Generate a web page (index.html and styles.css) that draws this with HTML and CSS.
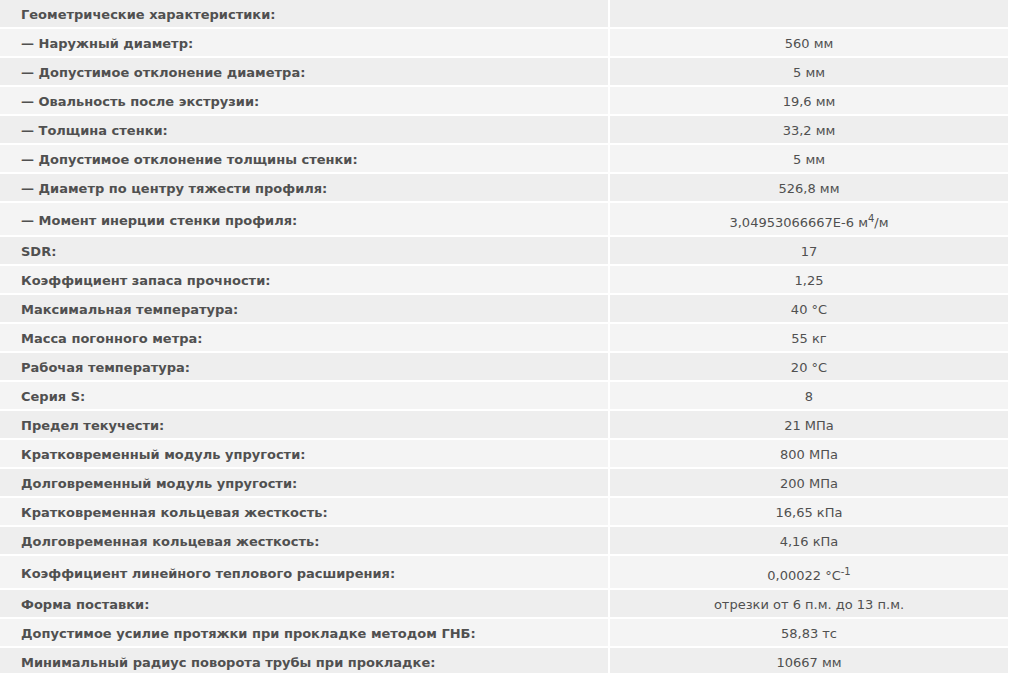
FILE: index.html
```html
<!DOCTYPE html>
<html lang="ru">
<head>
<meta charset="utf-8">
<title>Характеристики</title>
<link rel="stylesheet" href="styles.css">
</head>
<body>
<table class="props">
<tbody>
<tr><td class="name">Геометрические характеристики:</td><td class="val"></td></tr>
<tr><td class="name">— Наружный диаметр:</td><td class="val">560 мм</td></tr>
<tr><td class="name">— Допустимое отклонение диаметра:</td><td class="val">5 мм</td></tr>
<tr><td class="name">— Овальность после экструзии:</td><td class="val">19,6 мм</td></tr>
<tr><td class="name">— Толщина стенки:</td><td class="val">33,2 мм</td></tr>
<tr><td class="name">— Допустимое отклонение толщины стенки:</td><td class="val">5 мм</td></tr>
<tr><td class="name">— Диаметр по центру тяжести профиля:</td><td class="val">526,8 мм</td></tr>
<tr><td class="name">— Момент инерции стенки профиля:</td><td class="val">3,04953066667E-6 м<sup>4</sup>/м</td></tr>
<tr><td class="name">SDR:</td><td class="val">17</td></tr>
<tr><td class="name">Коэффициент запаса прочности:</td><td class="val">1,25</td></tr>
<tr><td class="name">Максимальная температура:</td><td class="val">40 °C</td></tr>
<tr><td class="name">Масса погонного метра:</td><td class="val">55 кг</td></tr>
<tr><td class="name">Рабочая температура:</td><td class="val">20 °C</td></tr>
<tr><td class="name">Серия S:</td><td class="val">8</td></tr>
<tr><td class="name">Предел текучести:</td><td class="val">21 МПа</td></tr>
<tr><td class="name">Кратковременный модуль упругости:</td><td class="val">800 МПа</td></tr>
<tr><td class="name">Долговременный модуль упругости:</td><td class="val">200 МПа</td></tr>
<tr><td class="name">Кратковременная кольцевая жесткость:</td><td class="val">16,65 кПа</td></tr>
<tr><td class="name">Долговременная кольцевая жесткость:</td><td class="val">4,16 кПа</td></tr>
<tr><td class="name">Коэффициент линейного теплового расширения:</td><td class="val">0,00022 °C<sup>-1</sup></td></tr>
<tr><td class="name">Форма поставки:</td><td class="val">отрезки от 6 п.м. до 13 п.м.</td></tr>
<tr><td class="name">Допустимое усилие протяжки при прокладке методом ГНБ:</td><td class="val">58,83 тс</td></tr>
<tr><td class="name">Минимальный радиус поворота трубы при прокладке:</td><td class="val">10667 мм</td></tr>
</tbody>
</table>
</body>
</html>
```
FILE: styles.css
```css
html, body {
  margin: 0;
  padding: 0;
  background: #ffffff;
}
.props {
  width: 1008px;
  border-collapse: collapse;
  font-family: "DejaVu Sans", Verdana, sans-serif;
  font-size: 13px;
  color: #505050;
}
.props td {
  height: 15px;
  line-height: 15px;
  padding: 7px 20px 5px 21px;
  border-bottom: 2px solid #ffffff;
  vertical-align: middle;
}
.props tr:nth-child(odd) td {
  background: #eeeeee;
}
.props tr:nth-child(even) td {
  background: #f4f4f4;
}
.props .name {
  width: 567px;
  font-weight: bold;
  border-right: 2px solid #ffffff;
}
.props .val {
  text-align: center;
  padding-left: 0;
  padding-right: 0;
}
.props sup {
  font-size: 10px;
  line-height: 18px;
  vertical-align: 5px;
}
```
